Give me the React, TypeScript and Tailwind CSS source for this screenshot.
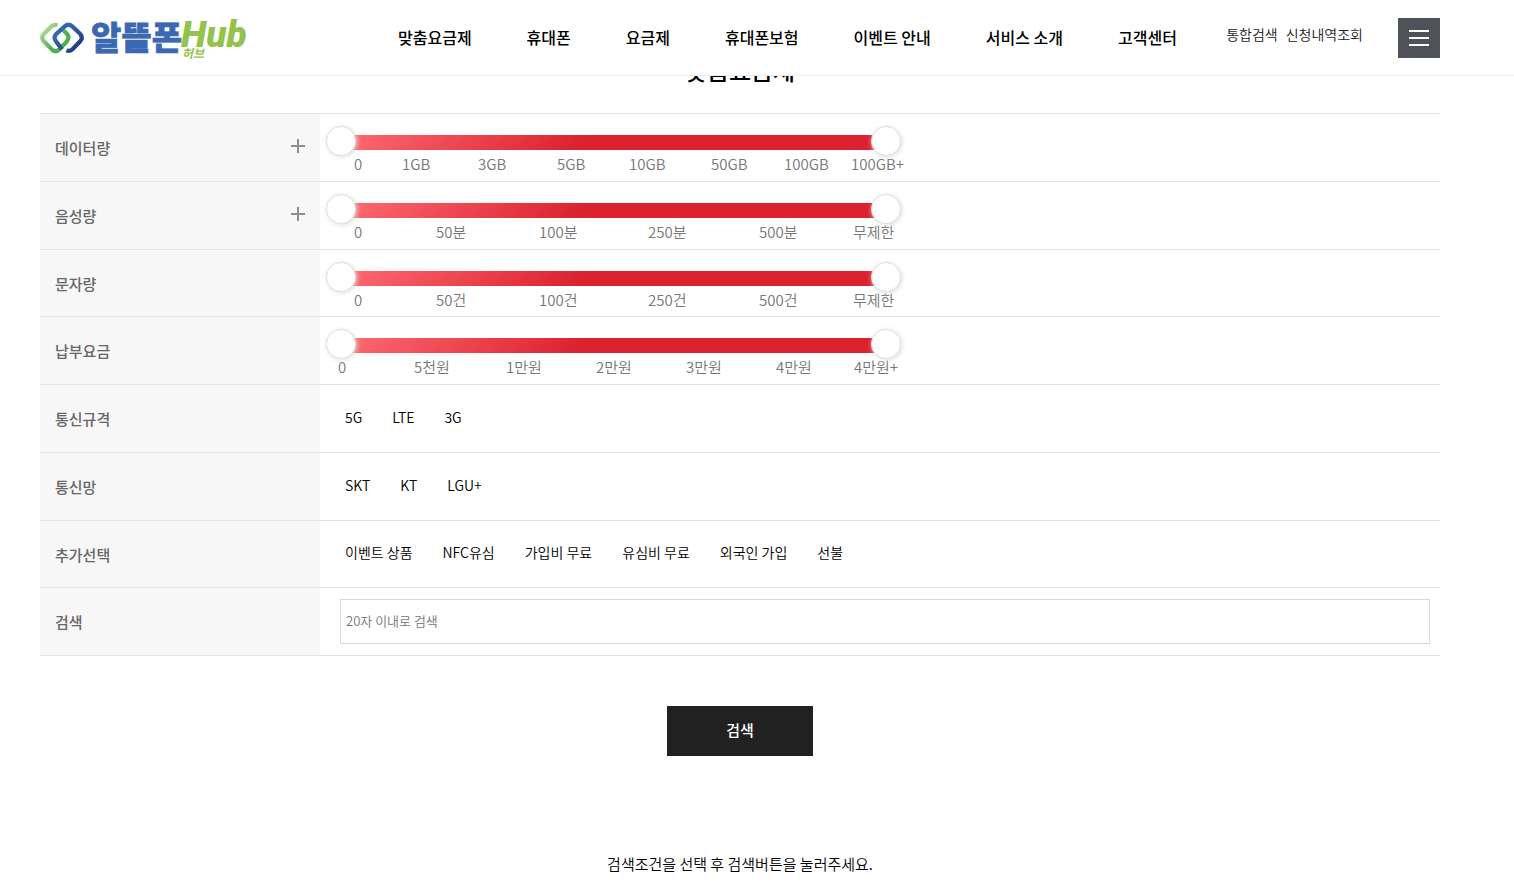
import React, { useState } from 'react';

const navItems = ['맞춤요금제', '휴대폰', '요금제', '휴대폰보험', '이벤트 안내', '서비스 소개', '고객센터'];

const sliders = [
  {
    id: 'data',
    label: '데이터량',
    expandable: true,
    ticks: ['0', '1GB', '3GB', '5GB', '10GB', '50GB', '100GB', '100GB+'],
    columns: 'pl-7 grid-cols-[48px_76px_79px_72px_82px_73px_67px_auto]',
  },
  {
    id: 'voice',
    label: '음성량',
    expandable: true,
    ticks: ['0', '50분', '100분', '250분', '500분', '무제한'],
    columns: 'pl-7 grid-cols-[82px_103px_109px_111px_94px_auto]',
  },
  {
    id: 'sms',
    label: '문자량',
    expandable: false,
    ticks: ['0', '50건', '100건', '250건', '500건', '무제한'],
    columns: 'pl-7 grid-cols-[82px_103px_109px_111px_94px_auto]',
  },
  {
    id: 'fee',
    label: '납부요금',
    expandable: false,
    ticks: ['0', '5천원', '1만원', '2만원', '3만원', '4만원', '4만원+'],
    columns: 'pl-3 grid-cols-[76px_92px_90px_90px_90px_78px_auto]',
  },
];

const optionGroups = [
  { id: 'spec', label: '통신규격', options: ['5G', 'LTE', '3G'] },
  { id: 'network', label: '통신망', options: ['SKT', 'KT', 'LGU+'] },
  {
    id: 'extra',
    label: '추가선택',
    options: ['이벤트 상품', 'NFC유심', '가입비 무료', '유심비 무료', '외국인 가입', '선불'],
  },
];

const rangeClass =
  'pointer-events-none absolute inset-0 m-0 h-[30px] w-full appearance-none bg-transparent outline-none ' +
  '[&::-webkit-slider-thumb]:pointer-events-auto [&::-webkit-slider-thumb]:size-[30px] [&::-webkit-slider-thumb]:cursor-pointer ' +
  '[&::-webkit-slider-thumb]:appearance-none [&::-webkit-slider-thumb]:rounded-full [&::-webkit-slider-thumb]:border ' +
  '[&::-webkit-slider-thumb]:border-[#e0e0e0] [&::-webkit-slider-thumb]:bg-white ' +
  '[&::-webkit-slider-thumb]:shadow-[1px_1px_5px_#ddd]';

function Logo() {
  return (
    <a href="#" aria-label="알뜰폰Hub 허브" className="block shrink-0">
      <svg width="216" height="61" viewBox="0 0 216 61">
        <defs>
          <linearGradient id="logoGreen" x1="0" y1="0" x2="1" y2="1">
            <stop offset="0.1" stopColor="#b5d99c" />
            <stop offset="0.6" stopColor="#52b152" />
            <stop offset="1" stopColor="#4bae4f" />
          </linearGradient>
          <linearGradient id="logoBlue" x1="0" y1="0" x2="1" y2="1">
            <stop offset="0.3" stopColor="#3565b0" />
            <stop offset="0.9" stopColor="#213a78" />
          </linearGradient>
        </defs>
        <g fill="none" strokeWidth="4.2">
          <path
            d="M17.4 18.4 Q14 17 11.3 19.4 L3.6 27.1 Q0.8 30.6 3.6 34 L12 42.6 Q15.5 45.8 19 42.6 L26.4 35 Q30 30.6 27.2 27.2 L23 22.8"
            stroke="url(#logoGreen)"
          />
          <path
            d="M22 42.2 L16 34.4 Q13.2 30.6 16 27.2 L24.7 19.4 Q28.5 16.2 32.3 19.4 L40.4 27.1 Q43.2 30.6 40.4 34 L32.5 42.2 Q29.6 44.8 26.4 43.4"
            stroke="url(#logoBlue)"
          />
        </g>
        <text x="51" y="43" fill="#3a69b2" stroke="#3a69b2" strokeWidth="0.6" className="font-['Noto_Sans_CJK_KR',sans-serif] text-[33px] font-black">
          알뜰폰
        </text>
        <text x="141" y="40" fill="#94c34b" className="font-[Roboto,sans-serif] text-[37px] font-black italic">
          Hub
        </text>
        <text x="142" y="51" fill="#94c34b" className="font-['Noto_Sans_CJK_KR',sans-serif] text-[12px] font-bold italic">
          허브
        </text>
      </svg>
    </a>
  );
}

function Header() {
  return (
    <header className="fixed inset-x-0 top-0 z-10 border-b border-[#ebebeb] bg-white">
      <div className="flex h-[75px] max-w-[1480px] items-center px-10">
        <Logo />
        <nav className="ml-[142px] flex gap-[55px] pb-[2px] text-[16px] font-medium whitespace-nowrap text-black">
          {navItems.map((item) => (
            <a key={item} href="#">
              {item}
            </a>
          ))}
        </nav>
        <div className="ml-auto flex items-center">
          <div className="mr-[35px] flex gap-2 pb-[6px] text-[14px] font-[350] whitespace-nowrap text-[#222]">
            <a href="#">통합검색</a>
            <a href="#">신청내역조회</a>
          </div>
          <button type="button" aria-label="전체메뉴" className="flex h-10 w-[42px] flex-col items-center justify-center gap-[5px] bg-[#50525a]">
            <span className="h-[2px] w-5 bg-white" />
            <span className="h-[2px] w-5 bg-white" />
            <span className="h-[2px] w-5 bg-white" />
          </button>
        </div>
      </div>
    </header>
  );
}

function Row({ label, htmlFor, expandable, children }: { label: string; htmlFor?: string; expandable?: boolean; children: React.ReactNode }) {
  return (
    <div className="flex border-b border-[#e5e5e5]">
      <div className="flex w-[280px] shrink-0 items-center justify-between bg-[#f7f7f7] px-[15px] text-[#666]">
        {htmlFor ? (
          <label htmlFor={htmlFor} className="pt-[2px] text-[15px] font-medium">
            {label}
          </label>
        ) : (
          <span className="pt-[2px] text-[15px] font-medium">{label}</span>
        )}
        {expandable && (
          <button type="button" aria-label={`${label} 펼치기`} className="mb-[3px]">
            <svg width="14" height="14" viewBox="0 0 14 14" className="block">
              <path d="M7 0v14M0 7h14" stroke="#8f8f8f" strokeWidth="2" />
            </svg>
          </button>
        )}
      </div>
      <div className="min-w-0 flex-1">{children}</div>
    </div>
  );
}

function RangeSlider({ label, ticks, columns }: { label: string; ticks: string[]; columns: string }) {
  const last = ticks.length - 1;
  const [min, setMin] = useState(0);
  const [max, setMax] = useState(last);

  return (
    <div className="ml-[6px] w-[575px] pt-3">
      <div className="relative flex h-[30px] items-center px-[15px]">
        <div className="mt-[3px] h-[15px] flex-1 bg-[#e9e9e9]">
          <div
            className="h-full bg-[linear-gradient(135deg,#ff6b72_0%,#db212e_45%)]"
            style={{ marginLeft: `${(min / last) * 100}%`, width: `${((max - min) / last) * 100}%` }}
          />
        </div>
        <input
          type="range"
          aria-label={`${label} 최소`}
          min={0}
          max={last}
          value={min}
          onChange={(e) => setMin(Math.min(Number(e.target.value), max))}
          className={rangeClass}
        />
        <input
          type="range"
          aria-label={`${label} 최대`}
          min={0}
          max={last}
          value={max}
          onChange={(e) => setMax(Math.max(Number(e.target.value), min))}
          className={rangeClass}
        />
      </div>
      <div className={`grid text-[15px] leading-4 font-[350] whitespace-nowrap text-[#777] ${columns}`}>
        {ticks.map((tick) => (
          <span key={tick}>{tick}</span>
        ))}
      </div>
    </div>
  );
}

export default function App() {
  const [selected, setSelected] = useState<string[]>([]);
  const [keyword, setKeyword] = useState('');

  const toggleOption = (option: string) => {
    setSelected((prev) => (prev.includes(option) ? prev.filter((o) => o !== option) : [...prev, option]));
  };

  return (
    <div className="bg-white font-['Noto_Sans_CJK_KR',sans-serif] text-black">
      <Header />
      <main className="max-w-[1480px] px-10 pt-[53px]">
        <h2 className="text-center text-[24px] leading-[34px] font-medium">맞춤요금제</h2>

        <form className="mt-[26px]" onSubmit={(e) => e.preventDefault()}>
          <div className="grid min-h-[543px] auto-rows-fr border-t border-[#e5e5e5]">
            {sliders.map((slider) => (
              <Row key={slider.id} label={slider.label} expandable={slider.expandable}>
                <RangeSlider label={slider.label} ticks={slider.ticks} columns={slider.columns} />
              </Row>
            ))}

            {optionGroups.map((group) => (
              <Row key={group.id} label={group.label}>
                <div className="flex h-full items-center gap-[30px] pb-[2px] pl-[25px] text-[14px] font-[350]">
                  {group.options.map((option) => (
                    <label key={option} className="cursor-pointer has-checked:text-[#db212e]">
                      <input
                        type="checkbox"
                        checked={selected.includes(option)}
                        onChange={() => toggleOption(option)}
                        className="sr-only"
                      />
                      {option}
                    </label>
                  ))}
                </div>
              </Row>
            ))}

            <Row label="검색" htmlFor="keyword">
              <div className="flex h-full items-center pr-[10px] pl-5">
                <input
                  id="keyword"
                  type="text"
                  maxLength={20}
                  value={keyword}
                  onChange={(e) => setKeyword(e.target.value)}
                  placeholder="20자 이내로 검색"
                  className="h-[45px] w-full border border-[#d9d9d9] px-[5px] pb-[2px] text-[13px] font-[350] outline-none placeholder:text-[#757575]"
                />
              </div>
            </Row>
          </div>

          <div className="mt-[50px] flex justify-center">
            <button type="submit" className="h-[50px] w-[146px] bg-[#212121] pb-[2px] text-[15px] font-medium text-white">
              검색
            </button>
          </div>
        </form>

        <p className="mt-24 text-center text-[15px] leading-6 font-[350]">검색조건을 선택 후 검색버튼을 눌러주세요.</p>
      </main>
    </div>
  );
}
